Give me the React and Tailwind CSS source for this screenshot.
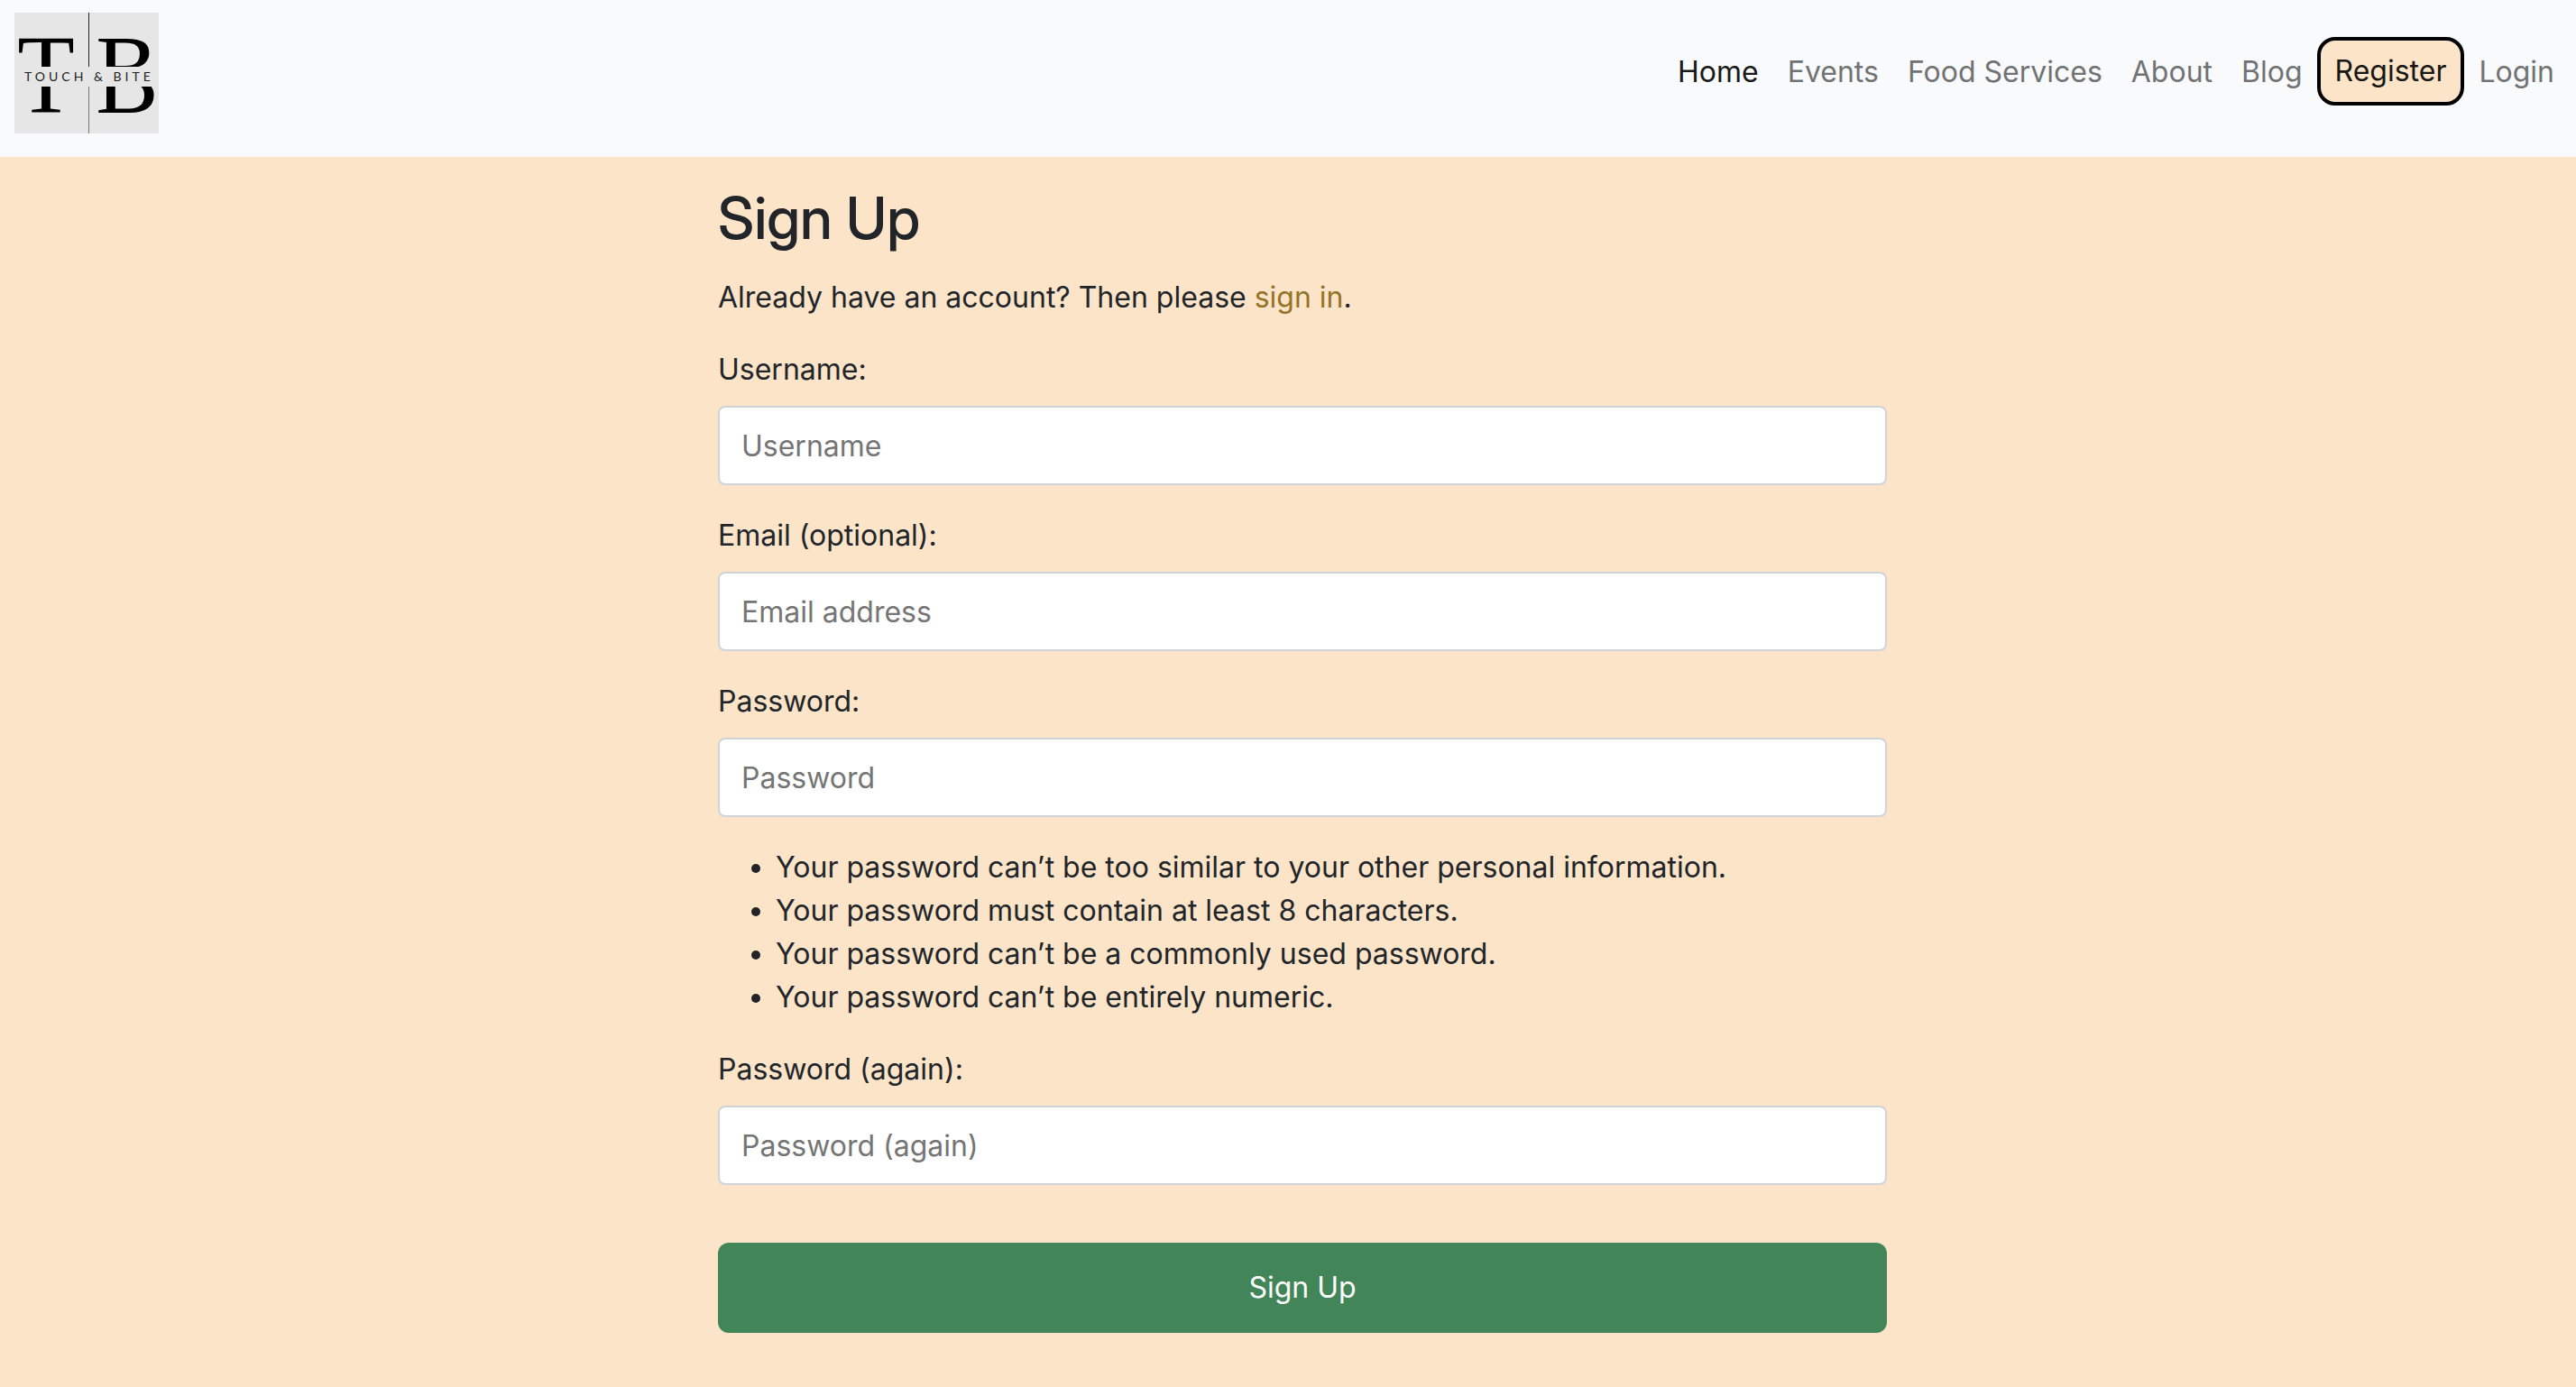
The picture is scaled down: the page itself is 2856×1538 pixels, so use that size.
const links = ["Events", "Food Services", "About", "Blog"];

const rules = [
  "Your password can’t be too similar to your other personal information.",
  "Your password must contain at least 8 characters.",
  "Your password can’t be a commonly used password.",
  "Your password can’t be entirely numeric.",
];

function Logo() {
  return (
    <svg viewBox="0 0 160 134" className="h-[134px] w-40" role="img" aria-label="Touch & Bite">
      <defs>
        <clipPath id="upper">
          <rect width="160" height="60" />
        </clipPath>
        <clipPath id="lower">
          <rect y="82" width="160" height="52" />
        </clipPath>
      </defs>
      <rect width="160" height="134" fill="#e6e6e6" />
      <rect x="82" width="1" height="60" fill="#222" />
      <rect x="82" y="82" width="1" height="52" fill="#777" />
      <g className="font-['Liberation_Serif',serif] text-[104px]" textAnchor="middle">
        <g clipPath="url(#upper)">
          <text x="35" y="97">T</text>
          <text x="125" y="97">B</text>
        </g>
        <g clipPath="url(#lower)">
          <text x="35" y="111">T</text>
          <text x="125" y="111">B</text>
        </g>
      </g>
      <text x="11" y="76" fill="#222" className="font-[Lato,sans-serif] text-[14px] tracking-[4px]">
        TOUCH &amp; BITE
      </text>
    </svg>
  );
}

function Field({ id, label, placeholder, type = "text" }) {
  return (
    <div className="flex flex-col gap-4">
      <label htmlFor={id}>{label}</label>
      <input
        id={id}
        type={type}
        placeholder={placeholder}
        className="h-22 w-full rounded-lg border-2 border-[#ced4da] bg-white px-6 placeholder:text-[#757575]"
      />
    </div>
  );
}

export default function App() {
  return (
    <div className="min-h-screen bg-[#fbe4c8] font-[Inter,sans-serif] text-[32px] leading-[48px] text-[#212529]">
      <header className="flex items-start justify-between bg-[#f8fafc] pt-3.5 pr-2 pb-[26px] pl-4">
        <a href="#home">
          <Logo />
        </a>
        <nav className="pt-[26px]">
          <ul className="flex items-center text-[#717273]">
            <li>
              <a href="#home" className="block p-4 text-[#191919]">Home</a>
            </li>
            {links.map((name) => (
              <li key={name}>
                <a href="#page" className="block p-4">{name}</a>
              </li>
            ))}
            <li className="mb-0.5">
              <a
                href="#register"
                className="block rounded-[20px] border-4 border-black bg-[#fbe4c8] px-4 py-2.5 text-[#191714]"
              >
                Register
              </a>
            </li>
            <li>
              <a href="#login" className="block p-4">Login</a>
            </li>
          </ul>
        </nav>
      </header>

      <main className="mx-auto max-w-[1360px] pt-7 pr-4 pb-12 pl-12">
        <h1 className="mb-6 font-['Inter_Display',Inter,sans-serif] text-[64px] leading-[80px] font-medium">
          Sign Up
        </h1>
        <p>
          Already have an account? Then please{" "}
          <a href="#signin" className="text-[#967227]">sign in</a>.
        </p>
        <form className="mt-8 flex flex-col gap-8">
          <Field id="username" label="Username:" placeholder="Username" />
          <Field id="email" label="Email (optional):" placeholder="Email address" type="email" />
          <Field id="password1" label="Password:" placeholder="Password" type="password" />
          <ul className="list-disc pl-16">
            {rules.map((rule) => (
              <li key={rule}>{rule}</li>
            ))}
          </ul>
          <Field id="password2" label="Password (again):" placeholder="Password (again)" type="password" />
          <button type="submit" className="mt-8 h-25 rounded-xl bg-[#418558] text-white">
            Sign Up
          </button>
        </form>
      </main>
    </div>
  );
}
